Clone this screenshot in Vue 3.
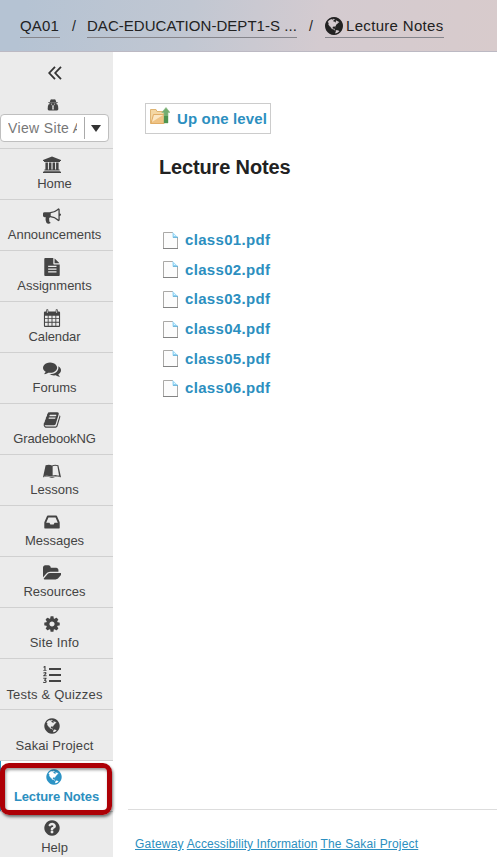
<script setup>
const icons = {
  globe: 'M896 128q209 0 385.5 103t279.5 279.5 103 385.5-103 385.5-279.5 279.5-385.5 103-385.5-103-279.5-279.5-103-385.5 103-385.5 279.5-279.5 385.5-103zm274 521q-2 1-9.5 9.5t-13.5 9.5q2 0 4.5-5t5-11 3.5-7q6-7 22-15 14-6 52-12 34-8 51 11-2-2 9.5-13t14.5-12q3-2 15-4.5t15-7.5l2-22q-12 1-17.5-7t-6.5-21q0 2-6 8 0-7-4.5-8t-11.5 1-9 1q-10-3-15-7.5t-8-16.5-4-15q-2-5-9.5-11t-9.5-10q-1-2-2.5-5.5t-3-6.5-4-5.5-5.5-2.5-7 5-7.5 10-4.5 5q-3-2-6-1.5t-4.5 1-4.5 3-5 3.5q-3 2-8.5 3t-8.5 2q15-5-1-11-10-4-16-3 9-4 7.5-12t-8.5-14h5q-1-4-8.5-8.5t-17.5-8.5-13-6q-8-5-34-9.5t-33-.5q-5 6-4.5 10.5t4 14 3.5 12.5q1 6-5.5 13t-6.5 12q0 7 14 15.5t10 21.5q-3 8-16 16t-16 12q-5 8-1.5 18.5t10.5 16.5q2 2 1.5 4t-3.5 4.5-5.5 4-6.5 3.5l-3 2q-11 5-20.5-6t-13.5-26q-7-25-16-30-23-8-29 1-5-13-41-26-25-9-58-4 6-1 0-15-7-15-19-12 3-6 4-17.5t1-13.5q3-13 12-23 1-1 7-8.5t9.5-13.5.5-6q35 4 50-11 5-5 11.5-17t10.5-17q9-6 14-5.5t14.5 5.5 14.5 5q14 1 15.5-11t-7.5-20q12 1 3-17-4-7-8-9-12-4-27 5-8 4 2 8-1-1-9.5 10.5t-16.5 17.5-16-5q-1-1-5.5-13.5t-9.5-13.5q-8 0-16 15 3-8-11-15t-24-8q19-12-8-27-7-4-20.5-5t-19.5 4q-5 7-5.5 11.5t5 8 10.5 5.5 11.5 4 8.5 3q14 10 8 14-2 1-8.5 3.5t-11.5 4.5-6 4q-3 4 0 14t-2 14q-5-5-9-17.5t-7-16.5q7 9-25 6l-10-1q-4 0-16 2t-20.5 1-13.5-8q-4-8 0-20 1-4 4-2-4-3-11-9.5t-10-8.5q-46 15-94 41 6 1 12-1 5-2 13-6.5t10-5.5q34-14 42-7l5-5q14 16 20 25-7-4-30-1-20 6-22 12 7 12 5 18-4-3-11.5-10t-14.5-11-15-5q-16 0-22 1-146 80-235 222 7 7 12 8 4 1 5 9t2.5 11 11.5-3q9 8 3 19 1-1 44 27 19 17 21 21 3 11-10 18-1-2-9-9t-9-4q-3 5 .5 18.5t10.5 12.5q-7 0-9.5 16t-2.5 35.5-1 23.5l2 1q-3 12 5.5 34.5t21.5 19.5q-13 3 20 43 6 8 8 9 3 2 12 7.5t15 10 10 10.5q4 5 10 22.5t14 23.5q-2 6 9.5 20t10.5 23q-1 0-2.5 1t-2.5 1q3 7 15.5 14t15.5 13q1 3 2 10t3 11 8 2q2-20-24-62-15-25-17-29-3-5-5.5-15.5t-4.5-14.5q2 0 6 1.5t8.5 3.5 7.5 4 2 3q-3 7 2 17.5t12 18.5 17 19 12 13q6 6 14 19.5t0 13.5q9 0 20 10.5t17 19.5q5 8 8 26t5 24q2 7 8.5 13.5t12.5 9.5l16 8 13 7q5 2 18.5 10.5t21.5 11.5q10 4 16 4t14.5-2.5 13.5-3.5q15-2 29 15t21 21q36 19 55 11-2 1 .5 7.5t8 15.5 9 14.5 5.5 8.5q5 6 18 15t18 15q6-4 7-9-3 8 7 20t18 10q14-3 14-32-31 15-49-18 0-1-2.5-5.5t-4-8.5-2.5-8.5 0-7.5 5-3q9 0 10-3.5t-2-12.5-4-13q-1-8-11-20t-12-15q-5 9-16 8t-16-9q0 1-1.5 5.5t-1.5 6.5q-13 0-15-1 1-3 2.5-17.5t3.5-22.5q1-4 5.5-12t7.5-14.5 4-12.5-4.5-9.5-17.5-2.5q-19 1-26 20-1 3-3 10.5t-5 11.5-9 7q-7 3-24 2t-24-5q-13-8-22.5-29t-9.5-37q0-10 2.5-26.5t3-25-5.5-24.5q3-2 9-9.5t10-10.5q2-1 4.5-1.5t4.5 0 4-1.5 3-6q-1-1-4-3-3-3-4-3 7 3 28.5-1.5t27.5 1.5q15 11 22-2 0-1-2.5-9.5t-.5-13.5q5 27 29 9 3 3 15.5 5t17.5 5q3 2 7 5.5t5.5 4.5 5-.5 8.5-6.5q10 14 12 24 11 40 19 44 7 3 11 2t4.5-9.5 0-14-1.5-12.5l-1-8v-18l-1-8q-15-3-18.5-12t1.5-18.5 15-18.5q1-1 8-3.5t15.5-6.5 12.5-8q21-19 15-35 7 0 11-9-1 0-5-3t-7.5-5-4.5-2q9-5 2-16 5-3 7.5-11t7.5-10q9 12 21 2 8-8 1-16 5-7 20.5-10.5t18.5-9.5q7 2 8-2t1-12 3-12q4-5 15-9t13-5l17-11q3-4 0-4 18 2 31-11 10-11-6-20 3-6-3-9.5t-15-5.5q3-1 11.5-.5t10.5-1.5q15-10-7-16-17-5-43 12zm-163 877q206-36 351-189-3-3-12.5-4.5t-12.5-3.5q-18-7-24-8 1-7-2.5-13t-8-9-12.5-8-11-7q-2-2-7-6t-7-5.5-7.5-4.5-8.5-2-10 1l-3 1q-3 1-5.5 2.5t-5.5 3-4 3 0 2.5q-21-17-36-22-5-1-11-5.5t-10.5-7-10-1.5-11.5 7q-5 5-6 15t-2 13q-7-5 0-17.5t2-18.5q-3-6-10.5-4.5t-12 4.5-11.5 8.5-9 6.5-8.5 5.5-8.5 7.5q-3 4-6 12t-5 11q-2-4-11.5-6.5t-9.5-5.5q2 10 4 35t5 38q7 31-12 48-27 25-29 40-4 22 12 26 0 7-8 20.5t-7 21.5q0 6 2 16z',
  file: 'M1596 476q14 14 28 36h-472v-472q22 14 36 28zm-476 164h544v1056q0 40-28 68t-68 28h-1344q-40 0-68-28t-28-68v-1600q0-40 28-68t68-28h800v544q0 40 28 68t68 28zM512 768v128h832V768zM512 1040v128h832V1040zM512 1312v128h832V1312z',
  horn: 'M1664 640q53 0 90.5 37.5t37.5 90.5-37.5 90.5-90.5 37.5v384q0 52-38 90t-90 38q-417-347-812-380-58 19-91 66t-31 100.5 40 92.5q-20 33-23 65.5t6 58 33.5 55 48 50 61.5 50.5q-29 58-111.5 83t-168.5 11.5-132-55.5q-7-23-29.5-87.5t-32-94.5-23-89-15-101 3.5-98.5 22-110.5h-122q-66 0-113-47t-47-113v-192q0-66 47-113t113-47h480q435 0 896-384 52 0 90 38t38 90v384zm-128 604v-954q-394 302-768 343v270q377 42 768 341z',
  chat: 'M1408 768q0 139-94 257t-256.5 186.5-353.5 68.5q-86 0-176-16-124 88-278 128-36 9-86 16h-3q-11 0-20.5-8t-11.5-21q-1-3-1-6.5t.5-6.5 2-6l2.5-5 3.5-5.5 4-5 4.5-5 4-4.5q5-6 23-25t26-29.5 22.5-29 25-38.5 20.5-44q-124-72-195-177t-71-224q0-139 94-257t256.5-186.5 353.5-68.5 353.5 68.5 256.5 186.5 94 257zm384 256q0 120-71 224.5t-195 176.5q10 24 20.5 44t25 38.5 22.5 29 26 29.5 23 25q1 1 4 4.5t4.5 5 4 5 3.5 5.5l2.5 5 2 6 .5 6.5-1 6.5q-3 14-13 22t-22 7q-50-7-86-16-154-40-278-128-90 16-176 16-271 0-472-132 58 4 88 4 161 0 309-45t264-129q125-92 192-212t67-254q0-77-23-152 129 71 204 178t75 230z',
  book: 'M1703 478q40 57 18 129l-275 906q-19 64-76.5 107.5t-122.5 43.5h-923q-77 0-148.5-53.5t-99.5-131.5q-24-67-2-127 0-4 3-27t4-37q1-8-3-21.5t-3-19.5q2-11 8-21t16.5-23.5 16.5-23.5q23-38 45-91.5t30-91.5q3-10 .5-30t-.5-28q3-11 17-28t17-23q21-36 42-92t25-90q1-9-2.5-32t.5-28q4-13 22-30.5t22-22.5q19-26 42.5-84.5t27.5-96.5q1-8-3-25.5t-2-26.5q2-8 9-18t18-23 17-21q8-12 16.5-30.5t15-35 16-36 19.5-32 26.5-23.5 36-11.5 47.5 5.5l-1 3q38-9 51-9h761q74 0 114 56t18 130l-274 906q-36 119-71.5 153.5t-128.5 34.5h-869q-27 0-38 15-11 16-1 43 24 70 144 70h923q29 0 56-15.5t35-41.5l300-987q7-22 5-57 38 15 59 43zm-1064 2q-4 13 2 22.5t20 9.5h608q13 0 25.5-9.5t16.5-22.5l21-64q4-13-2-22.5t-20-9.5h-608q-13 0-25.5 9.5t-16.5 22.5zm-83 256q-4 13 2 22.5t20 9.5h608q13 0 25.5-9.5t16.5-22.5l21-64q4-13-2-22.5t-20-9.5h-608q-13 0-25.5 9.5t-16.5 22.5z',
  inbox: 'M1151 960h316q-1-3-2.5-8.5t-2.5-7.5l-212-496h-708l-212 496q-1 3-2.5 8.5t-2.5 7.5h316l95 192h320zm513 30v482q0 26-19 45t-45 19h-1408q-26 0-45-19t-19-45v-482q0-62 25-123l238-552q10-25 36.5-42t52.5-17h832q26 0 52.5 17t36.5 42l238 552q25 61 25 123z',
  folder: 'M1879 952q0 31-31 66l-336 396q-43 51-120.5 86.5t-143.5 35.5h-1088q-34 0-60.5-13t-26.5-43q0-31 31-66l336-396q43-51 120.5-86.5t143.5-35.5h1088q34 0 60.5 13t26.5 43zm-343-344v160h-832q-94 0-197 47.5t-164 119.5l-337 396-5 6q0-4-.5-12.5t-.5-12.5v-960q0-92 66-158t158-66h320q92 0 158 66t66 158v32h544q92 0 158 66t66 158z',
  gear: 'M1152 896q0-106-75-181t-181-75-181 75-75 181 75 181 181 75 181-75 75-181zm512-109v222q0 12-8 23t-20 13l-185 28q-19 54-39 91 35 50 107 138 10 12 10 25t-9 23q-27 37-99 108t-94 71q-12 0-26-9l-138-108q-44 23-91 38-16 136-29 186-7 28-36 28h-222q-14 0-24.5-8.5t-11.5-21.5l-28-184q-49-16-90-37l-141 107q-10 9-25 9-14 0-25-11-126-114-165-168-7-10-7-23 0-12 8-23 15-21 51-66.5t54-70.5q-27-50-41-99l-183-27q-13-2-21-12.5t-8-23.5v-222q0-12 8-23t19-13l186-28q14-46 39-92-40-57-107-138-10-12-10-24 0-10 9-23 26-36 98.5-107.5t94.5-71.5q13 0 26 10l138 107q44-23 91-38 16-136 29-186 7-28 36-28h222q14 0 24.5 8.5t11.5 21.5l28 184q49 16 90 37l142-107q9-9 24-9 13 0 25 10 129 119 165 170 7 8 7 22 0 12-8 23-15 21-51 66.5t-54 70.5q26 50 41 98l183 28q13 2 21 12.5t8 23.5z',
  help: 'M1024 1376v-192q0-14-9-23t-23-9h-192q-14 0-23 9t-9 23v192q0 14 9 23t23 9h192q14 0 23-9t9-23zm256-672q0-88-55.5-163t-138.5-116-170-41q-243 0-371 213-15 24 8 42l132 100q7 6 19 6 16 0 25-12 53-68 86-92 34-24 86-24 48 0 85.5 26t37.5 59q0 38-20 61t-68 45q-63 28-115.5 86.5t-52.5 125.5v36q0 14 9 23t23 9h192q14 0 23-9t9-23q0-19 21.5-49.5t54.5-49.5q32-18 49-28.5t46-35 44.5-48 28-60.5 12.5-81zm384 192q0 209-103 385.5t-279.5 279.5-385.5 103-385.5-103-279.5-279.5-103-385.5 103-385.5 279.5-279.5 385.5-103 385.5 103 279.5 279.5 103 385.5z',
  bank: 'M896 60L1792 400V510H1690V590H102V510H0V400zM240 640H490V1340H590V640H840V1340H952V640H1202V1340H1302V640H1552V1340H1650V1450H142V1340H240zM80 1510H1712V1580H1792V1700H0V1580H80z',
  calendar: 'M320 256V100Q320 20 400 20H450Q530 20 530 100V256H1262V100Q1262 20 1342 20H1392Q1472 20 1472 100V256H1590Q1700 256 1700 360V1680Q1700 1780 1590 1780H202Q92 1780 92 1680V360Q92 256 202 256zM200 660V910H470V660zM560 660V910H850V660zM942 660V910H1232V660zM1322 660V910H1592V660zM200 1000V1280H470V1000zM560 1000V1280H850V1000zM942 1000V1280H1232V1000zM1322 1000V1280H1592V1000zM200 1370V1670H470V1370zM560 1370V1670H850V1370zM942 1370V1670H1232V1370zM1322 1370V1670H1592V1370zM390 130V400H460V130zM1332 130V400H1402V130z',
  lessons: 'M260 330Q620 210 896 350Q1172 210 1532 330L1792 1510Q1320 1400 980 1570H812Q472 1400 0 1510zM960 420V1350Q1230 1240 1600 1340L1430 410Q1160 330 960 420zM100 1400Q470 1320 800 1440H992Q1320 1320 1692 1400L1680 1430Q1320 1370 970 1500H822Q470 1370 90 1440z',
  list: 'M600 200H1792V400H600zM600 800H1792V1000H600zM600 1400H1792V1600H600zM130 0H250V390H350V480H30V390H140V140L50 180V70zM30 650Q350 520 350 730Q350 820 180 930H360V1030H20V940Q220 810 220 740Q220 680 50 750zM30 1180H350V1270L240 1390Q370 1410 370 1540Q370 1760 20 1680V1580Q250 1640 250 1550Q250 1480 110 1480V1400L210 1280H30z',
  spy: 'M520 100Q700 0 896 90Q1092 0 1272 100L1370 430H1600V550H192V430H422zM370 600H1422V800H1540Q1692 1000 1692 1500Q1692 1710 1500 1710H292Q100 1710 100 1500Q100 1000 252 800H370zM560 700L780 720L750 820H600zM1012 720L1232 700L1192 820H1042zM690 1000L790 1100L750 1500L850 1640L870 1120H922L942 1640L1042 1500L1002 1100L1102 1000L1000 960H792z',
}
const items = [
  ['bank', 'Home', 'home'], ['horn', 'Announcements', 'announcements'], ['file', 'Assignments', 'assignments'],
  ['calendar', 'Calendar', 'calendar'], ['chat', 'Forums', 'forums'], ['book', 'GradebookNG', 'gradebook'],
  ['lessons', 'Lessons', 'lessons'], ['inbox', 'Messages', 'messages'], ['folder', 'Resources', 'resources'],
  ['gear', 'Site Info', 'info'], ['list', 'Tests & Quizzes', 'tests'], ['globe', 'Sakai Project', 'sakai'],
  ['globe', 'Lecture Notes', 'active'], ['help', 'Help', 'help'],
]
const files = ['class01.pdf', 'class02.pdf', 'class03.pdf', 'class04.pdf', 'class05.pdf', 'class06.pdf']
</script>

<template>
  <div class="page">
    <header class="crumbs">
      <a class="crumb site">QA01</a><span class="slash">/</span>
      <a class="crumb dept">DAC-EDUCATION-DEPT1-S ...</a><span class="slash second">/</span>
      <a class="crumb current"><svg class="crumb-icon" viewBox="128 128 1536 1536"><path fill-rule="evenodd" :d="icons.globe" /></svg><span>Lecture Notes</span></a>
    </header>
    <div class="body">
      <nav class="side">
        <svg class="collapse" viewBox="0 0 14 14"><path d="M7 .8L1.2 7L7 13.2M13 .8L7.2 7L13 13.2" /></svg>
        <svg class="spy" viewBox="0 0 1792 1792"><path fill-rule="evenodd" :d="icons.spy" /></svg>
        <div class="select">
          <span class="select-text">View Site A</span>
          <span class="select-arrow"><i></i></span>
        </div>
        <ul class="menu">
          <li v-for="it in items" :key="it[1]" class="item" :class="it[2]">
            <svg class="icon" viewBox="0 0 1792 1792"><path fill-rule="evenodd" :d="icons[it[0]]" /></svg>
            <span class="label">{{ it[1] }}</span>
            <i v-if="it[2] === 'active'" class="ring"></i>
          </li>
        </ul>
      </nav>
      <main class="main">
        <a class="up">
          <svg class="up-icon" viewBox="0 0 20 18">
            <path d="M.5 2.5H6l1 2h7v12H.5z" fill="#f4d7a3" stroke="#dfb574" />
            <path d="M3.5 7.5H15l-1.2 9H1z" fill="#efc384" stroke="#e1ad66" />
            <path d="M2 15L4 8h9z" fill="#fbe7c4" />
            <path d="M16 .5L20 5.5h-2V16h-4V5.5h-2.2z" fill="#74ad70" stroke="#8fbd88" stroke-width=".6" />
            <path d="M14 9h4v7h-4z" fill="#4e9450" />
          </svg>
          <span>Up one level</span>
        </a>
        <h1>Lecture Notes</h1>
        <ul class="files">
          <li v-for="f in files" :key="f">
            <svg class="doc" viewBox="0 0 15 17">
              <path d="M.5 16.5V.5H10L14.5 5V16.5z" fill="#fcfcfc" />
              <path d="M.5 16V.5H10M14.5 5V16" fill="none" stroke="#aaa9a7" />
              <path d="M0 16.5H15" stroke="#838383" />
              <path d="M9.5 0L15 5.5H9.5z" fill="#9bd8f6" />
              <path d="M10 5.3H15" stroke="#5eafd8" />
              <path d="M11 3L12 4" stroke="#e3f7ff" />
            </svg>
            <a>{{ f }}</a>
          </li>
        </ul>
        <footer class="foot">
          <a class="gateway">Gateway</a><a class="access">Accessibility Information</a><a class="project">The Sakai Project</a>
        </footer>
      </main>
    </div>
  </div>
</template>

<style>
body { margin: 0; overflow: hidden; }
</style>
<style scoped>
* { box-sizing: border-box; }
.page { width: 497px; height: 857px; overflow: hidden; display: flex; flex-direction: column; font-family: "Liberation Sans", Arial, sans-serif; background: #fff; }
.crumbs { flex: none; height: 52px; display: flex; align-items: flex-start; padding: 15px 0 0 20px; background: linear-gradient(100deg, #b5c3d3 5%, #c1c7d2 38%, #d4cbd0 65%, #d8cbcc 100%); border-bottom: 1px solid #bcb9c3; color: #222; font-size: 15px; }
.crumb { height: 23px; line-height: 22px; border-bottom: 1px solid #85858b; white-space: nowrap; }
.site { width: 40px; letter-spacing: .2px; }
.dept { width: 210px; letter-spacing: .04px; }
.slash { width: 27px; padding-left: 12px; line-height: 22px; font-size: 14px; }
.second { width: 28px; }
.current { display: flex; align-items: center; gap: 3px; width: 119px; letter-spacing: .32px; }
.crumb-icon { flex: none; width: 18px; height: 18px; fill: #222; }
.body { flex: 1; min-height: 0; display: flex; }
.side { flex: none; width: 113px; background: #ebebeb; display: flex; flex-direction: column; color: #444; }
.collapse { flex: none; align-self: center; width: 14px; height: 14px; margin: 14px 3px 0 0; fill: none; stroke: #333; stroke-width: 1.8; }
.spy { flex: none; width: 12px; height: 12px; margin: 19px 0 0 47px; fill: #444; }
.select { flex: none; width: 109px; height: 28px; margin-top: 3px; padding: 0 0 0 7px; display: flex; align-items: center; border: 1px solid #bfbfbf; border-radius: 4px; background: #fff; }
.select-text { flex: none; width: 69px; overflow: hidden; white-space: nowrap; font-size: 14px; line-height: 24px; letter-spacing: .35px; color: #777; padding-bottom: 1px; }
.select-arrow { margin-left: 7px; height: 22px; width: 23px; display: flex; align-items: center; justify-content: center; border-left: 1px solid #aaa; }
.select-arrow i { border: 5.5px solid transparent; border-top: 7px solid #333; border-bottom: 0; }
.menu { flex: none; list-style: none; margin: 6px 0 0; padding: 0; }
.item { position: relative; height: 51.04px; padding-top: 7px; border-top: 1px solid #d0d0d0; display: flex; flex-direction: column; align-items: center; }
.icon { flex: none; width: 18px; height: 18px; margin-right: 9px; fill: #444; }
.label { font-size: 13px; line-height: 16px; margin: 2.2px 4px 0 0; white-space: nowrap; }
.announcements .label { letter-spacing: -.05px; }
.calendar .label { letter-spacing: -.1px; }
.gradebook .label { letter-spacing: -.13px; }
.info .label, .tests .label { letter-spacing: .2px; }
.sakai .label { letter-spacing: .1px; }
.active { background: #fff; color: #2c8fc0; font-weight: bold; }
.active::before { content: ""; position: absolute; left: 0; top: 0; width: 1px; height: 50px; background: #2c93c5; }
.active .icon { fill: #2c93c5; margin-right: 5px; }
.active .label { margin-right: 0; letter-spacing: -.12px; }
.ring { position: absolute; left: 0; top: 2px; width: 112px; height: 52px; border: 5px solid #ad0006; border-radius: 9px; box-shadow: 1px 2px 3px #0008, inset 1px 2px 3px #0006; z-index: 1; }
.main { flex: 1; display: flex; flex-direction: column; align-items: flex-start; padding-top: 51px; color: #2c8fc0; font-weight: bold; }
.up { margin-left: 32px; width: 126px; height: 31px; border: 1px solid #ccc; display: flex; align-items: center; padding-left: 4px; font-size: 15px; letter-spacing: .15px; white-space: nowrap; }
.up-icon { flex: none; width: 20px; height: 18px; margin: -5px 7px 0 0; }
h1 { margin: 21px 0 0 46px; font-size: 20px; line-height: 24px; letter-spacing: -.15px; color: #222; }
.files { list-style: none; margin: 46px 0 0 50px; padding: 0; }
.files li { height: 29.6px; display: flex; align-items: center; font-size: 15px; letter-spacing: .32px; }
.doc { width: 15px; height: 17px; margin: 1px 7px 0 0; }
.foot { margin: auto 0 0 15px; align-self: stretch; height: 48px; padding: 26px 0 0 7px; border-top: 1px solid #ddd; display: flex; gap: 3px; font-size: 12px; line-height: 16px; font-weight: normal; white-space: nowrap; }
.foot a { text-decoration: underline; }
.gateway { letter-spacing: .2px; }
.access { letter-spacing: .08px; }
.project { letter-spacing: .18px; }
</style>
